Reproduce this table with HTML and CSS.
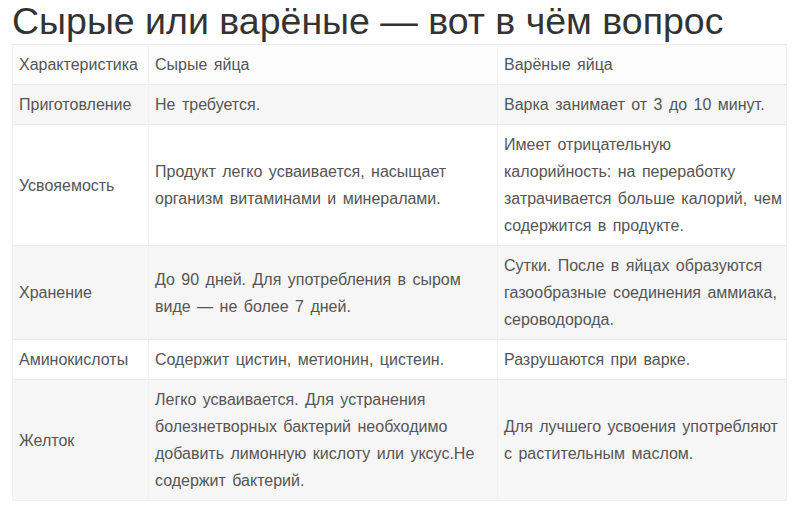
FILE: index.html
```html
<!DOCTYPE html>
<html lang="ru">
<head>
<meta charset="utf-8">
<link rel="stylesheet" href="styles.css">
</head>
<body>
<div class="page">
  <h1 class="title">Сырые или варёные — вот в чём вопрос</h1>
  <table class="cmp">
    <colgroup>
      <col class="c1"><col class="c2"><col class="c3">
    </colgroup>
    <tr class="head"><td>Характеристика</td><td>Сырые яйца</td><td>Варёные яйца</td></tr>
    <tr class="odd"><td>Приготовление</td><td>Не требуется.</td><td>Варка занимает от 3 до 10 минут.</td></tr>
    <tr class="even"><td>Усвояемость</td><td>Продукт легко усваивается, насыщает организм витаминами и минералами.</td><td>Имеет отрицательную калорийность: на переработку затрачивается больше калорий, чем содержится в продукте.</td></tr>
    <tr class="odd"><td>Хранение</td><td>До 90 дней. Для употребления в сыром виде — не более 7 дней.</td><td>Сутки. После в яйцах образуются газообразные соединения аммиака, сероводорода.</td></tr>
    <tr class="even"><td>Аминокислоты</td><td>Содержит цистин, метионин, цистеин.</td><td>Разрушаются при варке.</td></tr>
    <tr class="odd"><td>Желток</td><td>Легко усваивается. Для устранения болезнетворных бактерий необходимо добавить лимонную кислоту или уксус.Не содержит бактерий.</td><td>Для лучшего усвоения употребляют с растительным маслом.</td></tr>
  </table>
</div>
</body>
</html>
```
FILE: styles.css
```css
html, body {
  margin: 0;
  padding: 0;
  background: #ffffff;
}
.page {
  padding: 0 12px;
  font-family: "Liberation Sans", Arial, sans-serif;
}
.title {
  margin: 0;
  font-weight: normal;
  font-size: 37.5px;
  line-height: 42px;
  color: #333333;
}
.cmp {
  margin-top: 2px;
  width: 774px;
  border-collapse: collapse;
  table-layout: fixed;
  border: 1px solid #f0f0f0;
  font-size: 16px;
  line-height: 27px;
  word-spacing: 2px;
  color: #555555;
}
.c1 { width: 136px; }
.c2 { width: 349px; }
.c3 { width: 289px; }
.cmp td {
  padding: 6px 4px 6px 6px;
  vertical-align: middle;
  border-top: 1px solid #e9e9e9;
  border-left: 1px solid #f1f1f1;
}
.cmp tr.head td { background: #fdfdfd; }
.cmp tr.odd td { background: #f6f6f6; }
.cmp tr.even td { background: #ffffff; }
```
